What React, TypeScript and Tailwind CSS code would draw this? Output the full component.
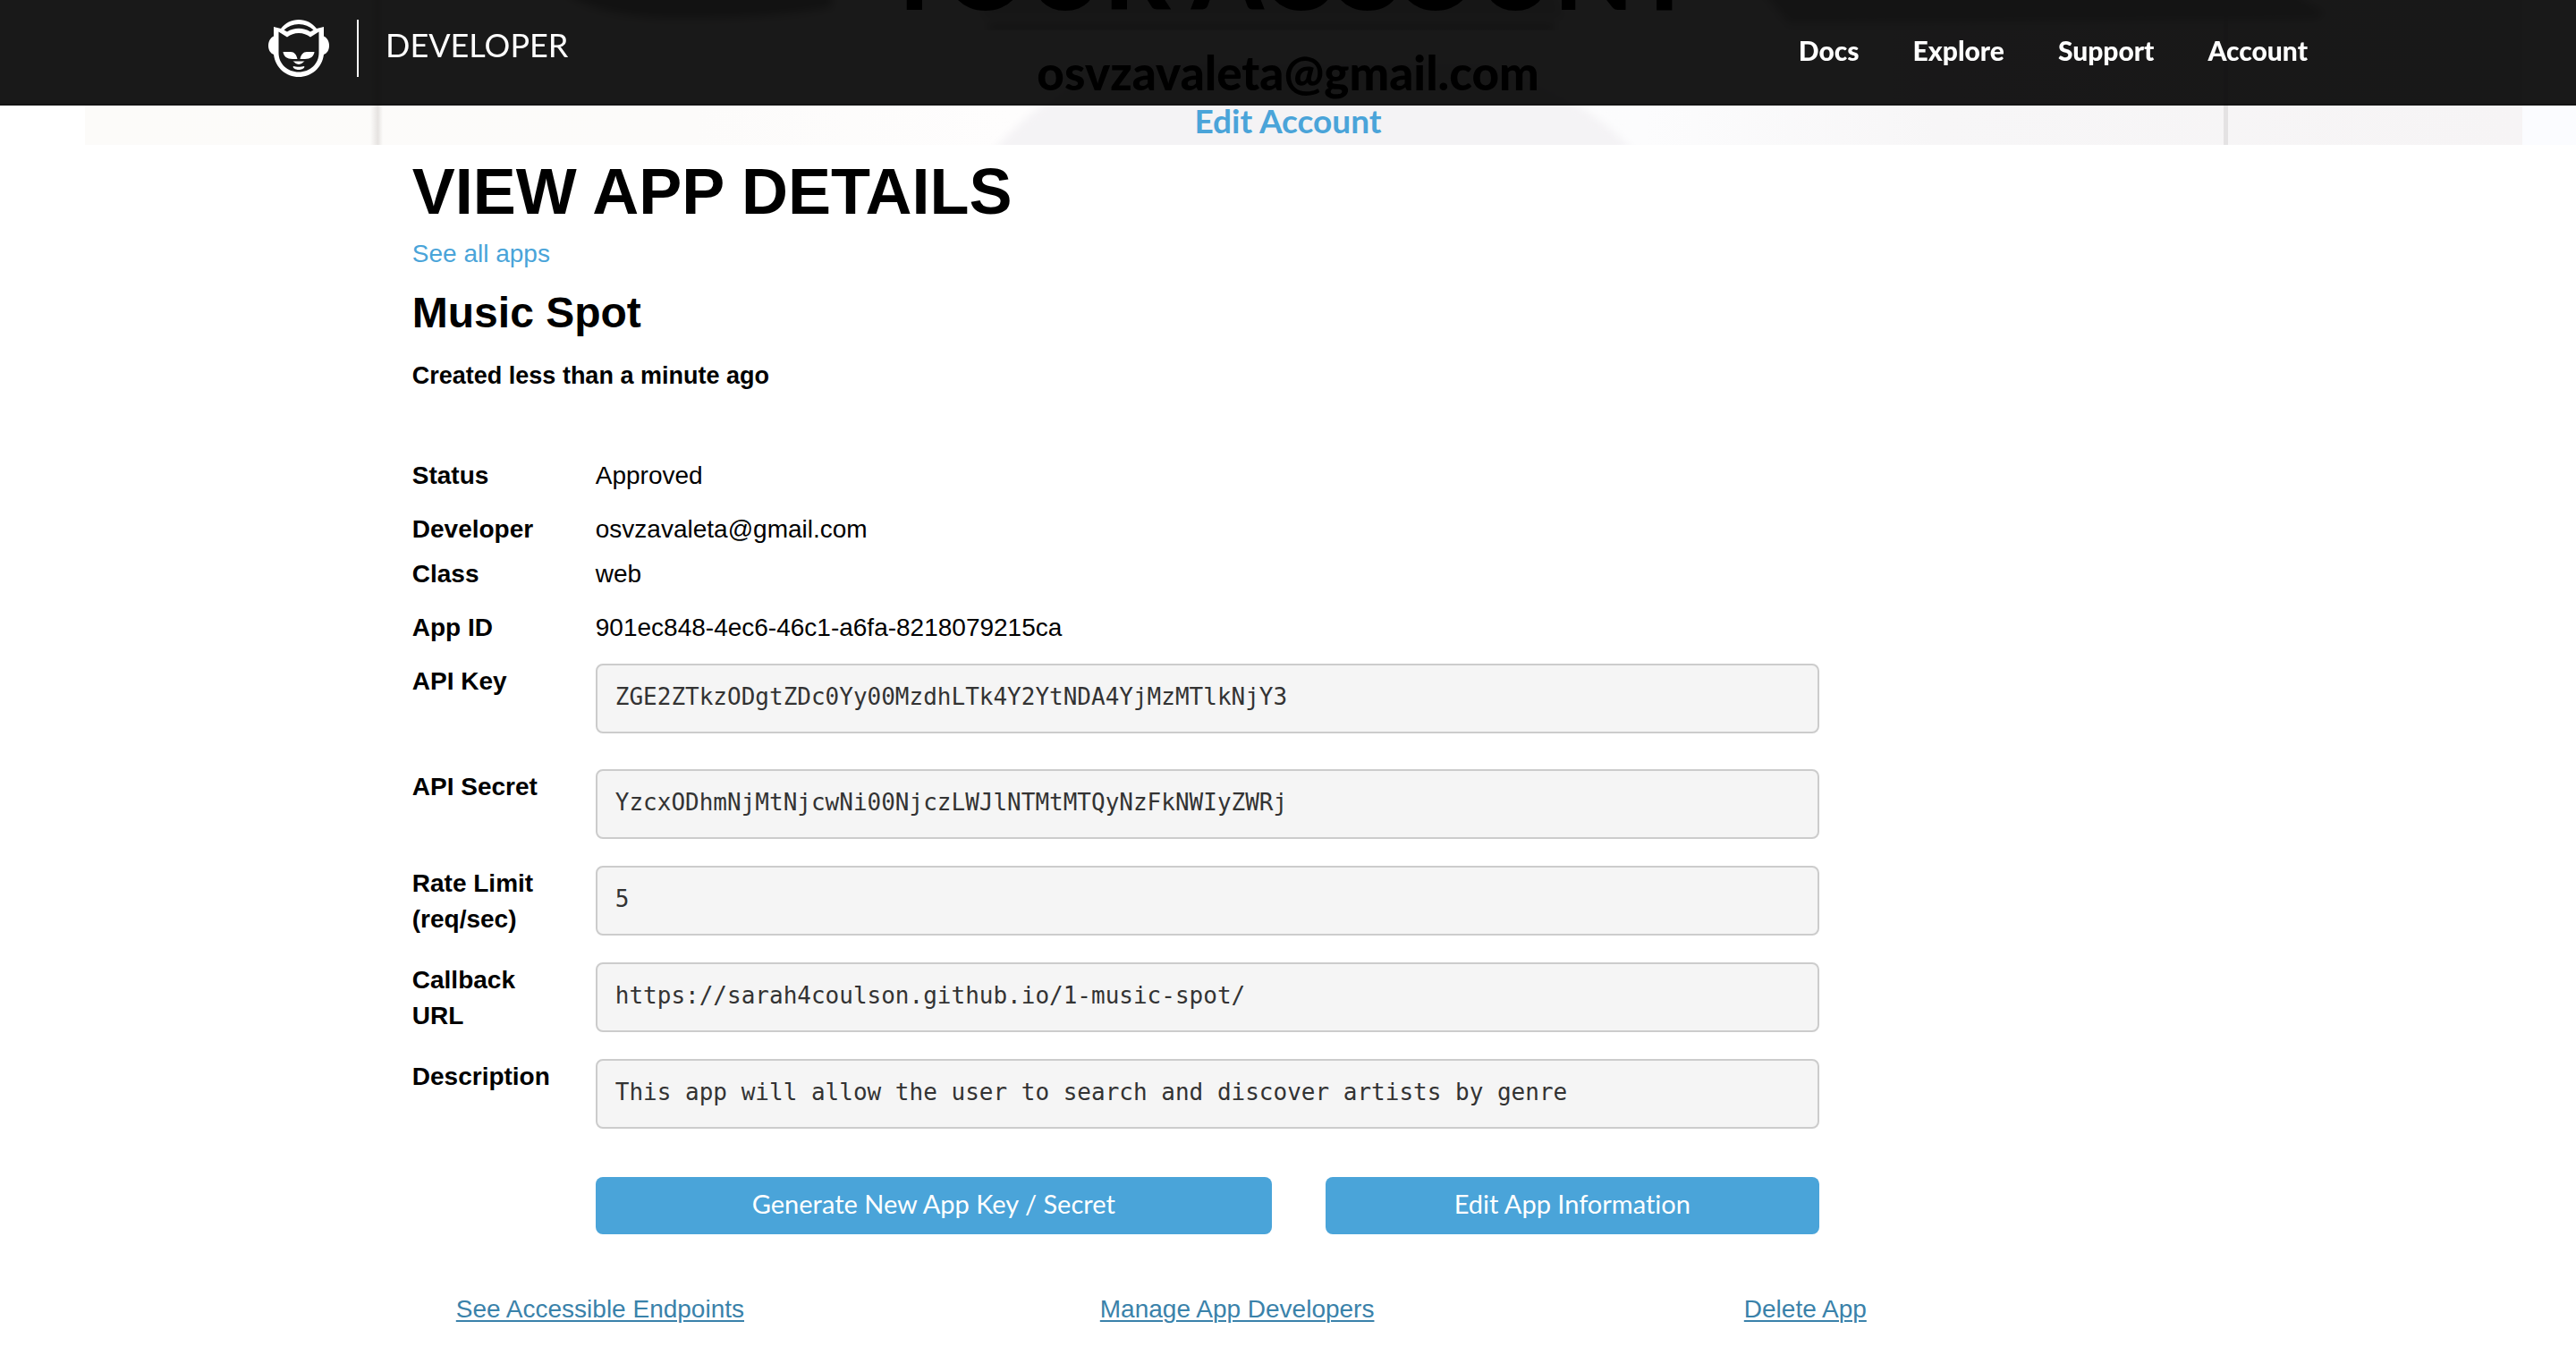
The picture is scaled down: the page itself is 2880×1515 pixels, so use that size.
import React from "react";

const helvetica = "font-['Helvetica_Neue','Liberation_Sans',sans-serif]";
const avenir = "font-['Avenir',Lato,sans-serif] [font-variant-ligatures:none]";

const navItems = ["Docs", "Explore", "Support", "Account"];

function Logo() {
  return (
    <svg viewBox="0 0 68 64" className="h-16 w-[68px] shrink-0" aria-hidden="true">
      <path
        fill="#fff"
        fillRule="evenodd"
        d="M6 8 L14 10 C19 3.500 26 0 34 0 C42 0 49 3.500 54 10 L62 8 V18.500 C66 20.500 68 24.500 68 29 C68 33.500 66 37.500 62 39 C60 54 48 64 34 64 C20 64 8 54 6 39 C2 37.500 0 33.500 0 29 C0 24.500 2 20.500 6 18.500 Z M11.500 13.500 V37 C11.500 49.500 21.500 58.500 34 58.500 C46.500 58.500 56.500 49.500 56.500 37 V13.500 L47 19.500 C43 16.500 39 15 34 15 C29 15 25 16.500 21 19.500 Z M17.500 11.500 L21 13.500 C25 11 29.500 9.800 34 9.800 C38.500 9.800 43 11 47 13.500 L50.500 11.500 C46 7.200 40.500 5 34 5 C27.500 5 22 7.200 17.500 11.500 Z"
      />
      <path
        fill="#fff"
        d="M16.500 36 H25 C29 36 31.500 39 32.500 44 H27 C21 44 17 41 16.500 36 Z M51.500 36 H43 C39 36 36.500 39 35.500 44 H41 C47 44 51 41 51.500 36 Z M27.500 46.500 H40.500 C38.500 47.500 37 50 34 50 C31 50 29.500 47.500 27.500 46.500 Z M28 52 C31 53 37 53 40 52 C41.500 53.500 38 56 34 56 C30 56 26.500 53.500 28 52 Z"
      />
    </svg>
  );
}

function Header() {
  return (
    <header className="fixed inset-x-0 top-0 z-10 h-[118px] border-b-2 border-black/20 bg-black/90">
      <div className="mx-auto flex w-[2280px] max-w-full items-start justify-between">
        <a href="#home" className="flex items-start pt-[22px] text-white">
          <Logo />
          <span className="ml-[31px] h-16 w-[2px] bg-white" />
          <span className={`${avenir} ml-[30px] pt-2 text-[36px] leading-[40px]`}>DEVELOPER</span>
        </a>
        <nav className="flex gap-[60px] pt-9">
          {navItems.map((item) => (
            <a key={item} href={`#${item.toLowerCase()}`} className={`${avenir} text-[30px] leading-[40px] font-black text-white`}>
              {item}
            </a>
          ))}
        </nav>
      </div>
    </header>
  );
}

function Banner() {
  return (
    <section
      className={`${avenir} relative flex h-[162px] flex-col items-center justify-end overflow-hidden bg-white pb-[5px] text-center text-black`}
    >
      <svg viewBox="0 0 2880 162" preserveAspectRatio="none" className="absolute inset-0 h-full w-full" aria-hidden="true">
        <defs>
          <linearGradient id="wall" x1="0" x2="1">
            <stop offset="0" stopColor="#fcfbf9" />
            <stop offset="0.25" stopColor="#fcfbfa" />
            <stop offset="0.38" stopColor="#fefdfd" />
            <stop offset="0.64" stopColor="#fcfcfd" />
            <stop offset="0.76" stopColor="#f7f6f7" />
            <stop offset="1" stopColor="#f6f4f5" />
          </linearGradient>
          <linearGradient id="seam" x1="0" x2="1">
            <stop offset="0" stopColor="#e6e3e1" stopOpacity="0" />
            <stop offset="0.6" stopColor="#e6e3e1" />
            <stop offset="1" stopColor="#e6e3e1" stopOpacity="0" />
          </linearGradient>
          <filter id="soft">
            <feGaussianBlur stdDeviation="5" />
          </filter>
        </defs>
        <rect x="95" width="2725" height="162" fill="url(#wall)" />
        <rect x="2820" width="60" height="162" fill="#fbfcff" />
        <rect x="414" width="14" height="162" fill="url(#seam)" />
        <rect x="2486" width="5" height="162" fill="#e4e2e3" />
        <path d="M1100 180 Q1160 110 1240 70 H1660 Q1780 110 1835 180 Z" fill="#f4f3f5" filter="url(#soft)" />
        <g filter="url(#soft)">
          <path d="M630 -10 H930 V8 Q860 22 740 20 Q660 16 630 -10 Z" fill="#b4b4b4" />
          <path d="M1100 -10 H1740 L1748 20 H1098 Z" fill="#e0e0e0" />
          <path d="M1105 30 H1738" stroke="#a8a8a8" strokeWidth="6" />
          <path d="M1970 -10 H2560 L2600 14 L2590 22 L2000 26 Z" fill="#c8c8c8" />
        </g>
      </svg>
      <h1 className="relative mb-7 text-[115px] leading-[110px] font-black">YOUR ACCOUNT</h1>
      <p className="relative text-[53px] leading-[64px] font-black">osvzavaleta@gmail.com</p>
      <a href="#edit-account" className="relative text-[37px] leading-[44px] font-bold text-[#4aa4d9]">
        Edit Account
      </a>
    </section>
  );
}

const code =
  "rounded-lg border-2 border-[#ccc] bg-[#f5f5f5] px-5 pt-[17px] pb-[21px] font-['DejaVu_Sans_Mono',monospace] text-[26px] leading-[36px] text-[#333] overflow-hidden";

const details: { label: string; value: string; boxed?: boolean; space: string }[] = [
  { label: "Status", value: "Approved", space: "pb-5" },
  { label: "Developer", value: "osvzavaleta@gmail.com", space: "pb-[10px]" },
  { label: "Class", value: "web", space: "pb-5" },
  { label: "App ID", value: "901ec848-4ec6-46c1-a6fa-8218079215ca", space: "pb-5" },
  { label: "API Key", value: "ZGE2ZTkzODgtZDc0Yy00MzdhLTk4Y2YtNDA4YjMzMTlkNjY3", boxed: true, space: "pb-10" },
  { label: "API Secret", value: "YzcxODhmNjMtNjcwNi00NjczLWJlNTMtMTQyNzFkNWIyZWRj", boxed: true, space: "pb-[30px]" },
  { label: "Rate Limit (req/sec)", value: "5", boxed: true, space: "pb-7" },
  { label: "Callback URL", value: "https://sarah4coulson.github.io/1-music-spot/", boxed: true, space: "pb-7" },
  { label: "Description", value: "This app will allow the user to search and discover artists by genre", boxed: true, space: "" },
];

const button = `${avenir} h-16 rounded-lg bg-[#4aa4d9] pb-1 text-[29px] leading-[40px] text-white`;
const link = "w-fit text-[#3a82aa] underline underline-offset-[3px] decoration-2";

export default function App() {
  return (
    <div className={`${helvetica} min-h-screen bg-white text-[28px] leading-[40px] text-black`}>
      <Header />
      <Banner />
      <main className="mx-auto w-[68%] pt-3">
        <h2 className="text-[72px] leading-[80px] font-bold">VIEW APP DETAILS</h2>
        <a href="#apps" className="mt-[10px] block w-fit text-[#4aa4d9]">
          See all apps
        </a>
        <h3 className="mt-4 text-[48px] leading-[60px] font-bold">Music Spot</h3>
        <p className="mt-5 text-[27px] font-bold">Created less than a minute ago</p>

        <dl className="mt-[72px] max-w-[1573px]">
          {details.map((d) => (
            <div key={d.label} className={`grid grid-cols-[165px_1fr] gap-10 ${d.space}`}>
              <dt className="font-bold">{d.label}</dt>
              <dd className="min-w-0">{d.boxed ? <pre className={code}>{d.value}</pre> : d.value}</dd>
            </div>
          ))}
        </dl>

        <div className="mt-[54px] grid max-w-[1573px] grid-cols-[756fr_552fr] gap-[60px] pl-[205px]">
          <button type="button" className={button}>
            Generate New App Key / Secret
          </button>
          <button type="button" className={button}>
            Edit App Information
          </button>
        </div>

        <div className="mt-16 ml-[49px] grid grid-cols-[720px_720px_1fr]">
          <a href="#endpoints" className={link}>See Accessible Endpoints</a>
          <a href="#developers" className={link}>Manage App Developers</a>
          <a href="#delete" className={link}>Delete App</a>
        </div>
      </main>
    </div>
  );
}
